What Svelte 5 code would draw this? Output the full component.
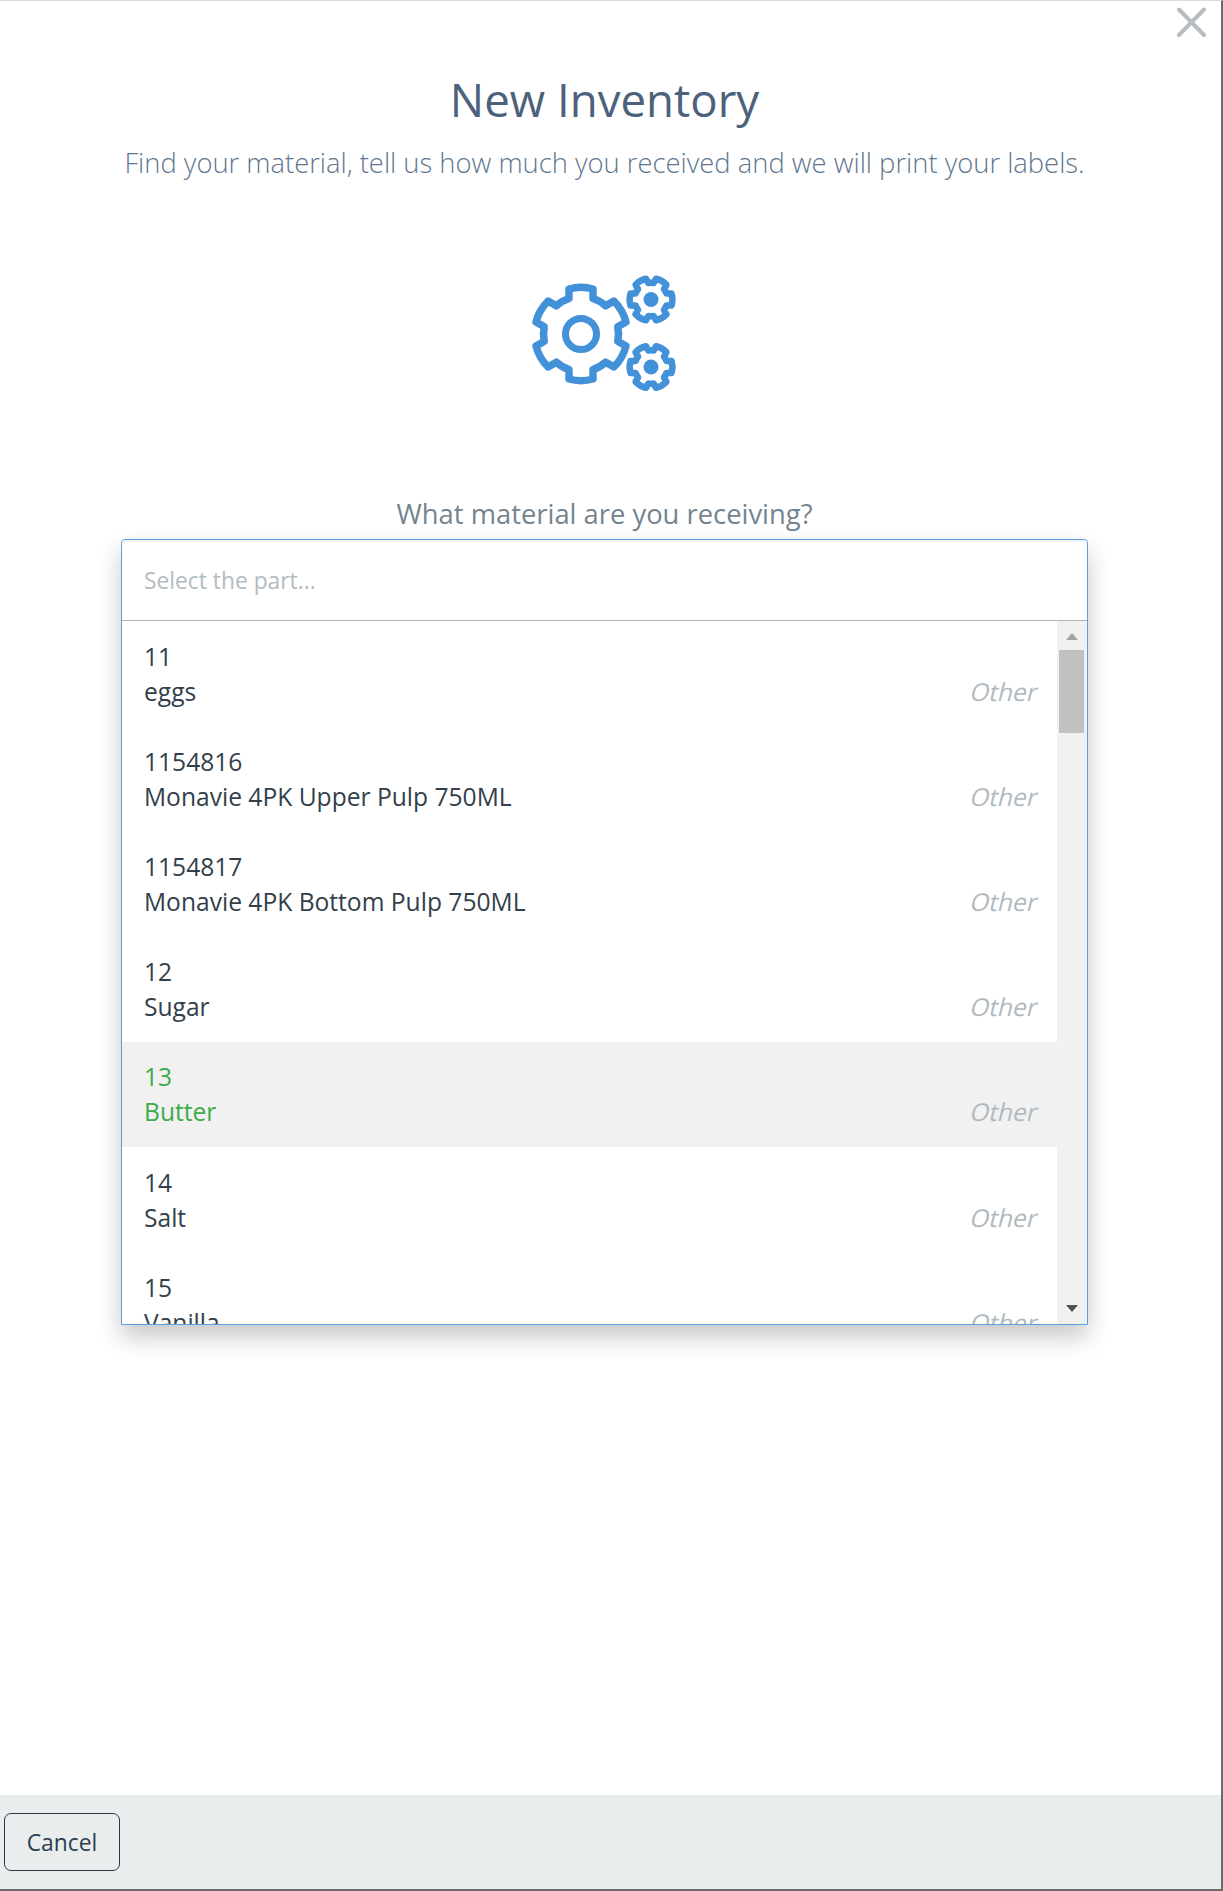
<script lang="ts">
  type Part = { code: string; name: string; kind: string; active?: boolean };

  const parts: Part[] = [
    { code: '11', name: 'eggs', kind: 'Other' },
    { code: '1154816', name: 'Monavie 4PK Upper Pulp 750ML', kind: 'Other' },
    { code: '1154817', name: 'Monavie 4PK Bottom Pulp 750ML', kind: 'Other' },
    { code: '12', name: 'Sugar', kind: 'Other' },
    { code: '13', name: 'Butter', kind: 'Other', active: true },
    { code: '14', name: 'Salt', kind: 'Other' },
    { code: '15', name: 'Vanilla', kind: 'Other' }
  ];

  // outline of a cog, teeth start at the given angle and go round every 60deg
  function gear(cx: number, cy: number, outer: number, inner: number, half: number, start: number) {
    let d = '';
    const f = (n: number) => n.toFixed(2);
    for (let i = 0; i < 6; i++) {
      const a = ((start + i * 60) * Math.PI) / 180;
      const ux = Math.cos(a);
      const uy = Math.sin(a);
      const pt = (along: number, side: number) =>
        `${f(cx + ux * along - uy * side)} ${f(cy + uy * along + ux * side)}`;
      d += `${i === 0 ? 'M' : `A${inner} ${inner} 0 0 1`} ${pt(inner, -half)} `;
      d += `L${pt(outer, -half)} A${outer} ${outer} 0 0 1 ${pt(outer, half)} L${pt(inner, half)} `;
    }
    const a0 = (start * Math.PI) / 180;
    const ex = cx + Math.cos(a0) * inner + Math.sin(a0) * half;
    const ey = cy + Math.sin(a0) * inner - Math.cos(a0) * half;
    return d + `A${inner} ${inner} 0 0 1 ${f(ex)} ${f(ey)} Z`;
  }
</script>

<div class="page">
  <main class="content">
    <button class="close" aria-label="Close">
      <svg width="30" height="30" viewBox="0 0 30 30" fill="none" stroke="#b5bdc1" stroke-width="4" stroke-linecap="round">
        <line x1="3" y1="2.5" x2="28" y2="28"></line>
        <line x1="28" y1="2.5" x2="3" y2="28"></line>
      </svg>
    </button>

    <h1>New Inventory</h1>
    <p class="lead">Find your material, tell us how much you received and we will print your labels.</p>

    <svg class="gears" width="170" height="130" viewBox="0 0 170 130" fill="none" stroke="#4391d9" stroke-linejoin="round">
      <path d={gear(71, 69, 45, 35.5, 12, -90)} stroke-width="7.5"></path>
      <circle cx="71" cy="69" r="15.5" stroke-width="7"></circle>
      <path d={gear(141, 34.5, 20.5, 15.5, 6, 0)} stroke-width="6.5"></path>
      <circle cx="141" cy="34.5" r="7.5" fill="#4391d9" stroke="none"></circle>
      <path d={gear(141, 102, 20.5, 15.5, 6, 0)} stroke-width="6.5"></path>
      <circle cx="141" cy="102" r="7.5" fill="#4391d9" stroke="none"></circle>
    </svg>

    <label class="question" for="part">What material are you receiving?</label>

    <div class="select">
      <input id="part" class="search" type="text" placeholder="Select the part..." />
      <div class="body">
        <ul class="options">
          {#each parts as part}
            <li class="option" class:active={part.active}>
              <div class="names">
                <div>{part.code}</div>
                <div>{part.name}</div>
              </div>
              <span class="kind">{part.kind}</span>
            </li>
          {/each}
        </ul>
        <div class="scrollbar">
          <span class="arrow up"></span>
          <span class="thumb"></span>
          <span class="arrow down"></span>
        </div>
      </div>
    </div>
  </main>

  <footer class="footer">
    <button class="cancel">Cancel</button>
  </footer>
</div>

<style>
  :global(body) {
    margin: 0;
    background: #fff;
    overflow: hidden;
  }

  .page {
    box-sizing: border-box;
    height: 1891px;
    display: flex;
    flex-direction: column;
    border-top: 1px solid #dcdcdc;
    border-right: 2px solid #6b6b6b;
    border-bottom: 2px solid #6b6b6b;
    font-family: 'Open Sans', sans-serif;
    color: #2b3a47;
  }

  .content {
    position: relative;
    flex: 1;
    display: flex;
    flex-direction: column;
    align-items: center;
    padding-right: 12px;
  }

  .close {
    position: absolute;
    top: 6px;
    right: 15px;
    padding: 0;
    border: none;
    background: none;
    display: flex;
  }

  h1 {
    margin: 68px 0 0;
    font-size: 45.6px;
    line-height: 60px;
    font-weight: 400;
    color: #4c617c;
  }

  .lead {
    margin: 16px 0 0;
    font-size: 27.36px;
    line-height: 36px;
    font-weight: 300;
    color: #5f7790;
  }

  .gears {
    margin-top: 84px;
    margin-right: 19px;
  }

  .question {
    margin-top: 101px;
    font-size: 27.36px;
    line-height: 36px;
    color: #74848f;
  }

  .select {
    box-sizing: border-box;
    width: 967px;
    height: 786px;
    margin-top: 7px;
    display: flex;
    flex-direction: column;
    background: #fff;
    border: 1px solid #5a9fe0;
    border-radius: 4px 4px 0 0;
    box-shadow: 0 12px 24px rgba(0, 0, 0, 0.22);
  }

  .search {
    box-sizing: border-box;
    flex: none;
    width: 100%;
    height: 81px;
    padding: 0 22px;
    border: none;
    border-bottom: 1px solid #a9b4bb;
    border-radius: 4px 4px 0 0;
    outline: none;
    box-shadow: inset 0 2px 2px rgba(0, 0, 0, 0.05);
    font: 400 22.8px 'Open Sans', sans-serif;
  }

  .search::placeholder {
    color: #b3bcc1;
    opacity: 1;
  }

  .body {
    flex: 1;
    min-height: 0;
    display: flex;
    overflow: hidden;
  }

  .options {
    flex: 1;
    margin: 0;
    padding: 0;
    list-style: none;
  }

  .option {
    box-sizing: border-box;
    height: 105.2px;
    padding: 17.5px 19px 17.5px 22px;
    display: flex;
    justify-content: space-between;
    align-items: flex-end;
    font-size: 24.6px;
    line-height: 35px;
    color: #333f4b;
  }

  .option.active {
    background: #f1f1f1;
    color: #3dab4a;
  }

  /* the original has no true italic here, so the roman is slanted */
  .kind {
    display: inline-block;
    transform: skewX(-14deg);
    color: #b0b9be;
  }

  .scrollbar {
    flex: none;
    width: 30px;
    background: #f1f1f1;
    display: flex;
    flex-direction: column;
    align-items: center;
  }

  .arrow {
    width: 0;
    height: 0;
    border-left: 6.5px solid transparent;
    border-right: 6.5px solid transparent;
  }

  .arrow.up {
    margin-top: 12px;
    border-bottom: 7px solid #a3a3a3;
  }

  .arrow.down {
    margin-top: auto;
    margin-bottom: 12px;
    border-top: 7px solid #505050;
  }

  .thumb {
    width: 25px;
    height: 83px;
    margin: 10px 1px 0 0;
    background: #c1c1c1;
  }

  .footer {
    flex: none;
    height: 94px;
    padding: 18px 0 0 4px;
    box-sizing: border-box;
    background: #e9eded;
  }

  .cancel {
    box-sizing: border-box;
    width: 116px;
    height: 58px;
    padding: 0;
    border: 1px solid #2c3742;
    border-radius: 7px;
    background: transparent;
    font: 400 22.8px 'Open Sans', sans-serif;
    color: #2b3f52;
  }
</style>
